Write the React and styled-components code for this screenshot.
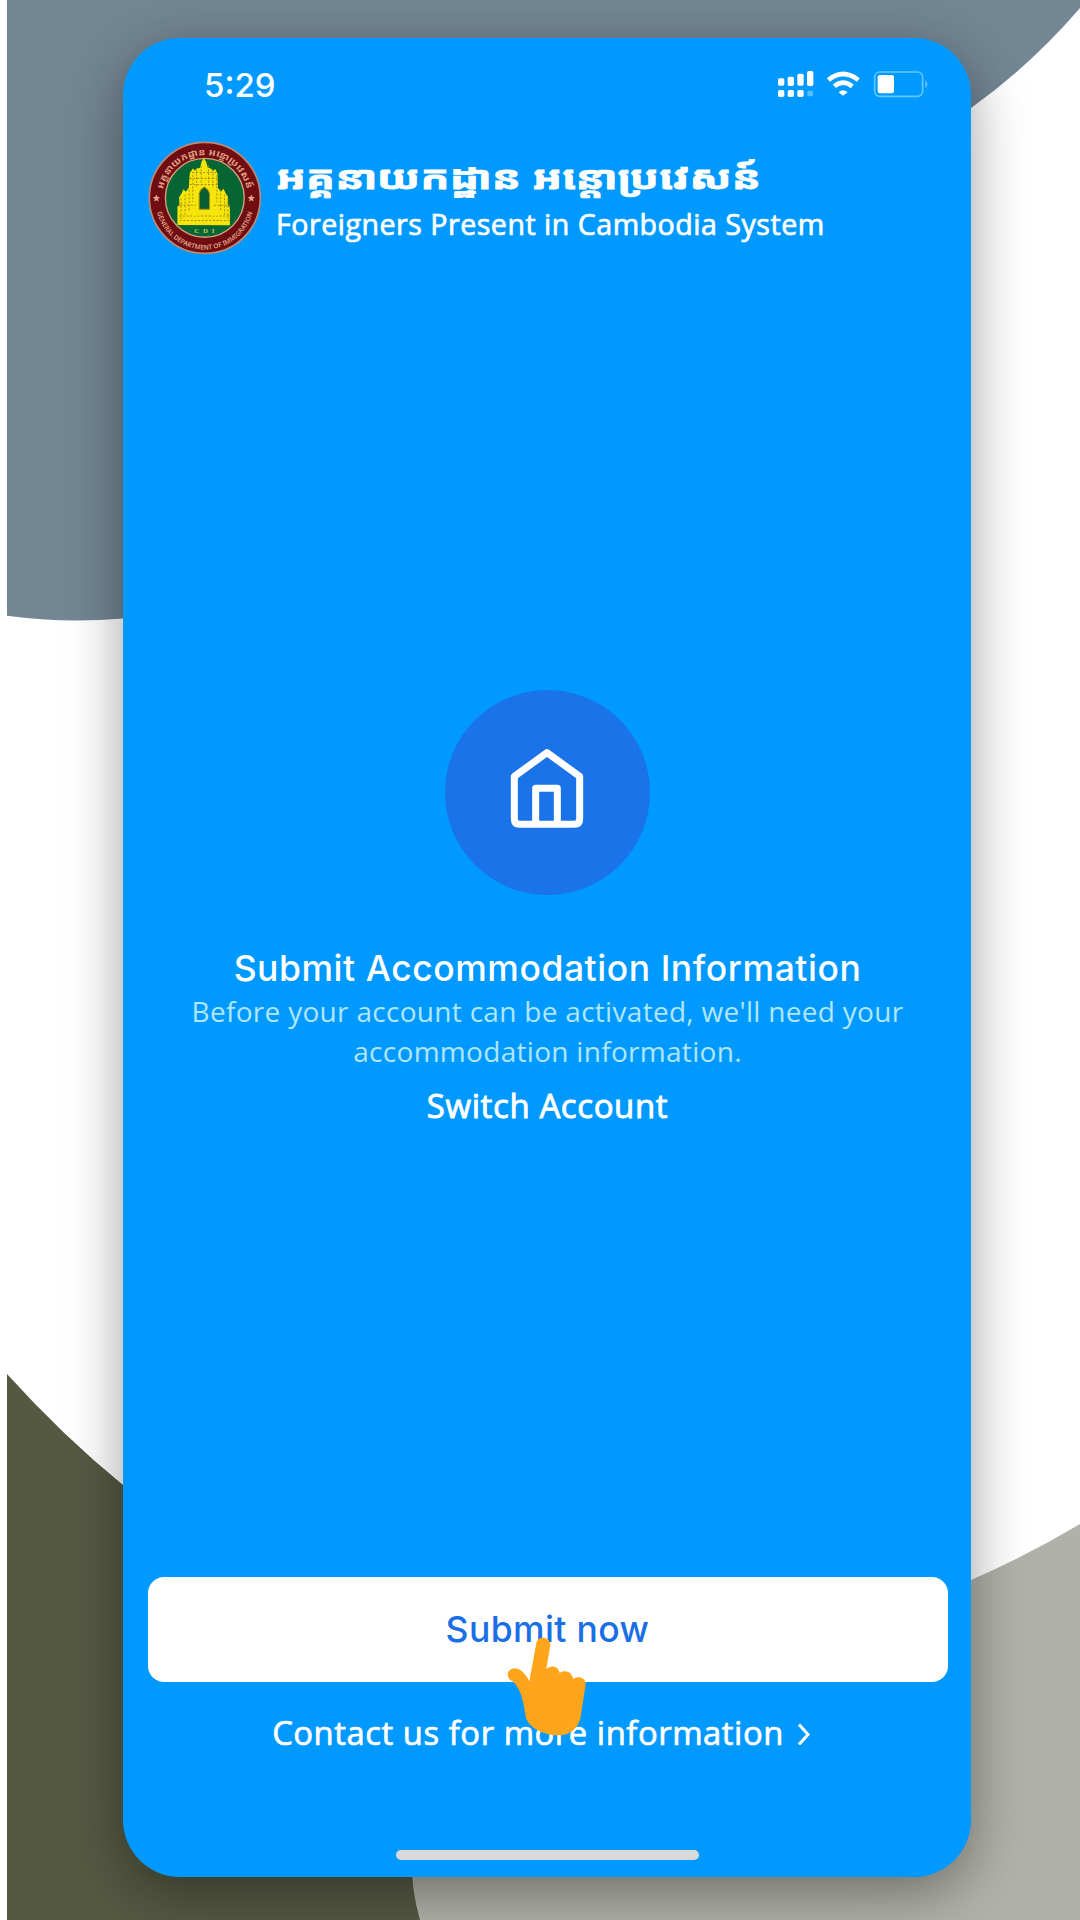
import React from "react";
import styled, { createGlobalStyle } from "styled-components";

const Global = createGlobalStyle`
  * { box-sizing: border-box; }
  html, body { margin: 0; padding: 0; background: #fff; }
`;

const Page = styled.div`
  position: relative;
  width: 1080px;
  height: 1920px;
  overflow: hidden;
  background: #fff;
  padding: 38px 109px 43px 123px;
  font-family: "Open Sans", "Noto Sans", sans-serif;
  color: #fff;
`;

const Backdrop = styled.svg`
  position: absolute;
  inset: 0;
`;

const Phone = styled.main`
  position: relative;
  display: flex;
  flex-direction: column;
  width: 848px;
  height: 1839px;
  padding: 0 23px 0 25px;
  border-radius: 57px;
  background: #0099ff;
  box-shadow: 0 16px 56px rgba(0, 0, 0, 0.38);
`;

const StatusBar = styled.div`
  display: flex;
  justify-content: space-between;
  align-items: center;
  height: 94px;
  padding: 0 18px 0 56px;
`;

const Clock = styled.span`
  font: 500 33px/40px Inter, sans-serif;
`;

const StatusIcons = styled.svg`
  width: 152px;
  height: 30px;
`;

const Header = styled.header`
  display: flex;
  align-items: center;
  gap: 14px;
  height: 131px;
`;

const Seal = styled.svg`
  width: 114px;
  height: 114px;
  flex: none;
`;

const Titles = styled.div`
  display: flex;
  flex-direction: column;
  padding-top: 5px;
  white-space: nowrap;
`;

const KhmerTitle = styled.div`
  align-self: flex-start;
  font: 700 32px/48px "Noto Sans Khmer", "Khmer OS Muol Light", "Noto Sans", sans-serif;
  transform: scaleX(1.352);
  transform-origin: left center;
  -webkit-text-stroke: 0.8px #fff;
`;

const Subtitle = styled.div`
  font-size: 28.6px;
  line-height: 46px;
  letter-spacing: 0.5px;
  -webkit-text-stroke: 0.7px #fff;
`;

const Hero = styled.section`
  flex: 1;
  display: flex;
  flex-direction: column;
  align-items: center;
  padding: 427px 1px 0 0;
  text-align: center;
  white-space: nowrap;
`;

const HomeCircle = styled.div`
  display: flex;
  align-items: center;
  justify-content: center;
  width: 205px;
  height: 205px;
  border-radius: 50%;
  background: #1a73e8;
`;

const Title = styled.h1`
  margin: 49px 0 0;
  font: 500 35.5px/50px Inter, sans-serif;
  letter-spacing: 0.55px;
`;

const Description = styled.p`
  margin: -3px 0 0;
  font-size: 28px;
  line-height: 40px;
  font-weight: 400;
  letter-spacing: 0.3px;
  color: #b0e6ff;
`;

const SwitchLink = styled.a`
  margin-top: 12px;
  font-size: 33px;
  line-height: 46px;
  letter-spacing: 0.6px;
  -webkit-text-stroke: 0.9px #fff;
`;

const Footer = styled.footer`
  display: flex;
  flex-direction: column;
  align-items: center;
  height: 300px;
`;

const SubmitButton = styled.button`
  position: relative;
  width: 800px;
  height: 105px;
  padding: 0 1px 0 0;
  border: 0;
  border-radius: 16px;
  background: #fff;
  color: #1a6fe6;
  font: 500 35.5px/105px Inter, sans-serif;
  letter-spacing: 0.4px;
`;

const Pointer = styled.svg`
  position: absolute;
  left: 359px;
  top: 59px;
  width: 80px;
  height: 102px;
`;

const ContactLink = styled.a`
  display: flex;
  align-items: center;
  gap: 13px;
  margin: 28px 0 0 -13px;
  font-size: 32.8px;
  line-height: 46px;
  letter-spacing: 0.55px;
  -webkit-text-stroke: 0.7px #fff;
  white-space: nowrap;
`;

const HomeBar = styled.div`
  width: 303px;
  height: 10px;
  margin: 94px 2px 0 0;
  border-radius: 5px;
  background: #d9d9d9;
`;

function SealArt() {
  return (
    <Seal viewBox="25 18 341 341">
      <defs>
        <path id="ringTop" d="M67 188 A128 128 0 0 1 323 188" />
        <path id="ringBottom" d="M48 196 A147 147 0 0 0 342 196" />
      </defs>
      <circle cx="195" cy="188" r="166" fill="#6f0d12" stroke="#c08a72" strokeWidth="5" />
      <circle cx="195" cy="188" r="118" fill="#056634" stroke="#d7a07c" strokeWidth="4" />
      <g fill="#e0a184" fontFamily="'Noto Sans Khmer', 'Noto Sans', sans-serif" fontWeight="700" textAnchor="middle">
        <text fontSize="27"><textPath href="#ringTop" startOffset="50%" textLength="350" lengthAdjust="spacingAndGlyphs">អគ្គនាយកដ្ឋាន អន្តោប្រវេសន៍</textPath></text>
        <text fontSize="20" fontWeight="600"><textPath href="#ringBottom" startOffset="50%" textLength="390" lengthAdjust="spacingAndGlyphs">GENERAL DEPARTMENT OF IMMIGRATION</textPath></text>
      </g>
      <path fill="#e0a184" d="M50 178l3 7 8 1-6 5 2 8-7-4-7 4 2-8-6-5 8-1zM334 178l3 7 8 1-6 5 2 8-7-4-7 4 2-8-6-5 8-1z" />
      <path
        fill="#f5e50a"
        d="M113 269V214l6-4-1-24 7-10 6-14 7 8 9-12 3-44 9-14 6 6 6-6 10-2 4-17 7-12 7 12 5 17 9 2 7 7 6-5 7 14 1 42 9 12 8-9 7 15 6 8v26l6 6v54z"
      />
      <path fill="none" stroke="#a88f12" strokeWidth="3" strokeDasharray="6 5" d="M124 190v60M136 178v60M148 164v62M159 120v80M170 104v55M184 92v58M206 92v58M219 104v55M231 120v80M242 164v62M254 178v60M264 190v60M150 130h87M157 112h74M150 148h88M120 210h48M222 210h48M118 242h150M120 256h148" />
      <path fill="#075e30" stroke="#a88f12" strokeWidth="3" d="M178 222V174l5-10 10-9 11 9 5 10v48z" />
      <path fill="#f5e50a" d="M151 238l18-12h53l16 12-10 4-30-4-36 5z" />
      <text x="195" y="292" textAnchor="middle" fontFamily="'Liberation Serif', serif" fontWeight="700" fontSize="21" letterSpacing="3" fill="#c3c957">C D I</text>
    </Seal>
  );
}

export default function App() {
  return (
    <>
      <Global />
      <Page>
        <Backdrop width="1080" height="1920" viewBox="0 0 1080 1920">
          <path fill="#728693" d="M7 0H1080V8Q1032 64 971 108L123 618.5Q64 623.5 7 615.8z" />
          <path fill="#555942" d="M7 1374Q63 1436 123 1485L600 1877V1920H7z" />
          <path fill="#b0b2aa" d="M1080 1524Q1028 1555 971 1580L411 1850Q411 1890 420 1920H1080z" />
        </Backdrop>
        <Phone>
          <StatusBar>
            <Clock>5:29</Clock>
            <StatusIcons viewBox="111 90 456 90">
              <g fill="#fff">
                <rect x="111" y="115" width="19" height="22" rx="5" />
                <rect x="140" y="110" width="19" height="28" rx="5" />
                <rect x="169" y="101" width="19" height="36" rx="5" />
                <rect x="198" y="93" width="19" height="45" rx="5" />
                <rect x="111" y="150" width="19" height="21" rx="5" />
                <rect x="140" y="150" width="19" height="21" rx="5" />
                <rect x="169" y="150" width="19" height="21" rx="5" />
                <rect x="199" y="152" width="17" height="17" rx="4" opacity=".35" />
                <path d="M293 157Q306 144 320 157L306 167z" />
              </g>
              <g fill="none" stroke="#fff" strokeWidth="14">
                <path d="M262 120Q306 84 352 120" />
                <path d="M280 139Q306 117 334 139" />
              </g>
              <rect x="401" y="96" width="144" height="73" rx="15" fill="none" stroke="#62c6ff" strokeWidth="5" />
              <rect x="410" y="105" width="49" height="55" rx="7" fill="#fff" />
              <path d="M554 123q9 10 0 20z" fill="#62c6ff" stroke="#62c6ff" strokeWidth="2" />
            </StatusIcons>
          </StatusBar>
          <Header>
            <SealArt />
            <Titles>
              <KhmerTitle lang="km">អគ្គនាយកដ្ឋាន អន្តោប្រវេសន៍</KhmerTitle>
              <Subtitle>Foreigners Present in Cambodia System</Subtitle>
            </Titles>
          </Header>
          <Hero>
            <HomeCircle>
              <svg width="205" height="205" viewBox="75 60 615 615" fill="none" stroke="#fff" strokeWidth="21" strokeLinejoin="round">
                <path d="M381 248L479 319V447Q479 463 463 463H299Q283 463 283 447V319z" />
                <path d="M347 463V355H412V463" />
              </svg>
            </HomeCircle>
            <Title>Submit Accommodation Information</Title>
            <Description>
              Before your account can be activated, we'll need your
              <br />
              accommodation information.
            </Description>
            <SwitchLink>Switch Account</SwitchLink>
          </Hero>
          <Footer>
            <SubmitButton>
              Submit now
              <Pointer viewBox="321 170 240 306">
                <path
                  fill="#ffa51c"
                  d="M409 192C412 169 450 169 451 197L439 269C453 256 475 259 479 281C492 271 516 276 519 299C533 289 557 293 557 315L542 412C536 447 509 468 475 468C429 467 385 444 377 412C372 380 367 335 340 307C317 300 317 268 344 267C365 268 379 289 388 306z"
                />
              </Pointer>
            </SubmitButton>
            <ContactLink>
              Contact us for more information
              <svg width="14" height="24" viewBox="0 0 14 24" fill="none" stroke="#fff" strokeWidth="3">
                <path d="M2 3.5L11 13.5L2 23.5" />
              </svg>
            </ContactLink>
            <HomeBar />
          </Footer>
        </Phone>
      </Page>
    </>
  );
}
